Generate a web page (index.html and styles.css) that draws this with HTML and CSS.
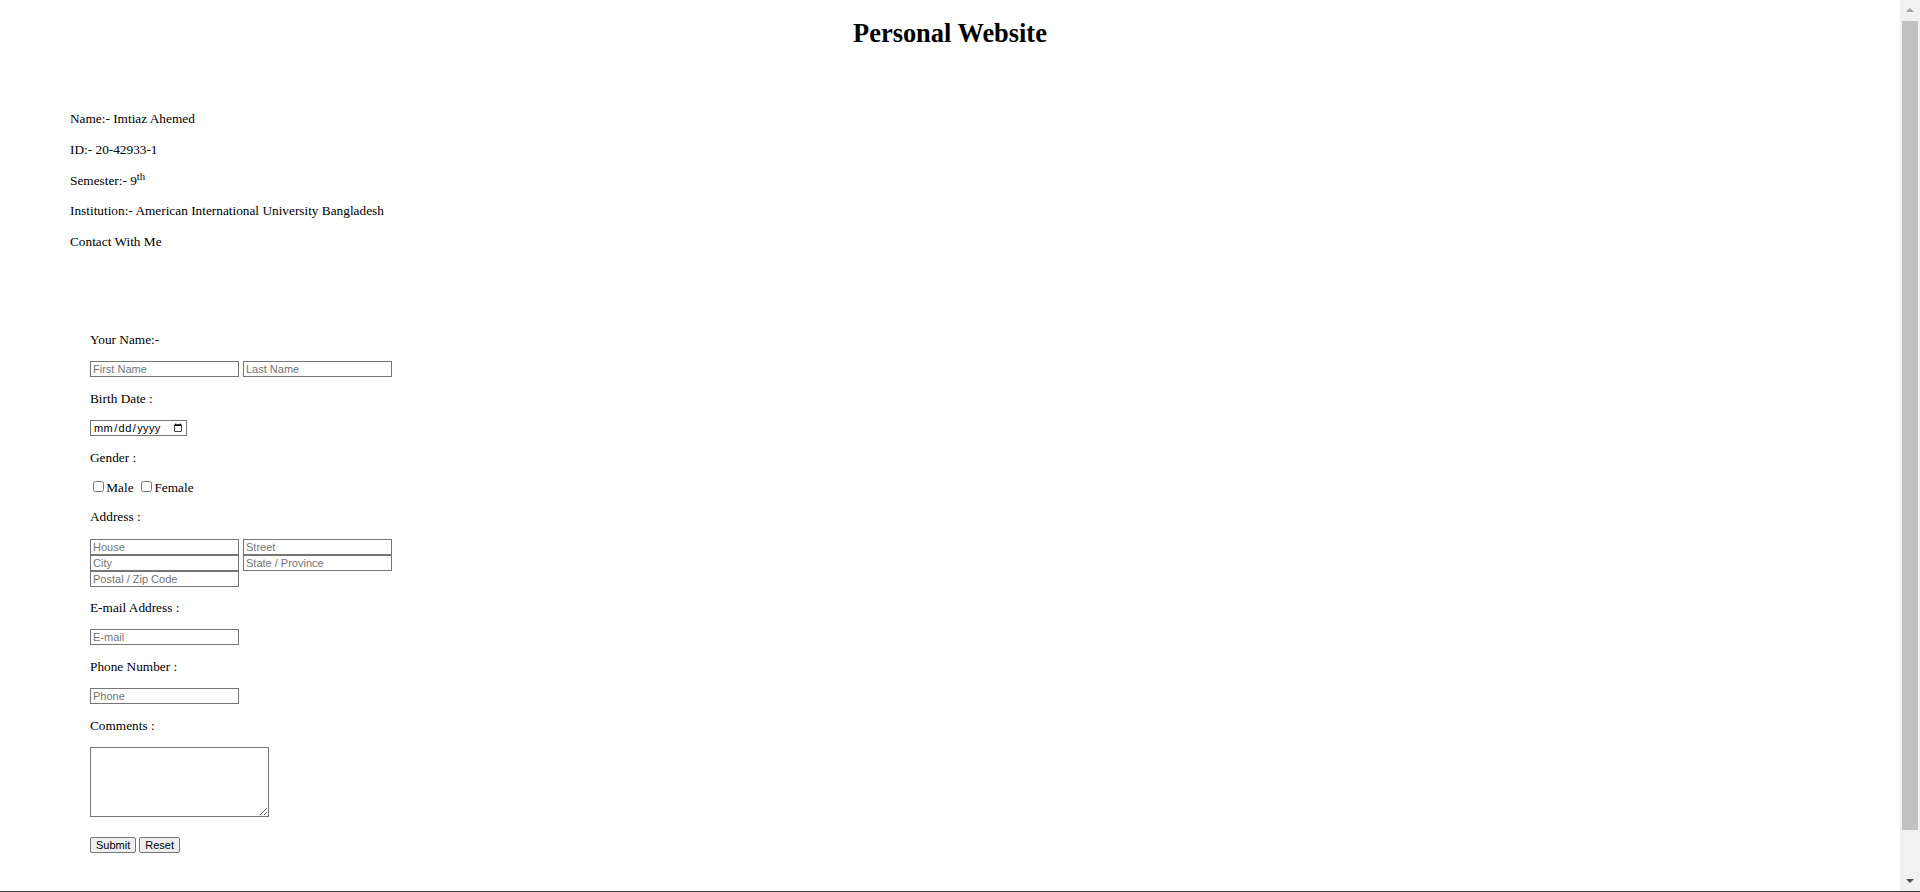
FILE: index.html
```html
<!DOCTYPE html>
<html lang="en">
<head>
<meta charset="utf-8">
<title>Personal Website</title>
<link rel="stylesheet" href="styles.css">
</head>
<body>
<header class="site-header">
  <h1 class="title">Personal Website</h1>
</header>
<main class="page">
  <section class="info">
    <p class="info-line">Name:- Imtiaz Ahemed</p>
    <p class="info-line">ID:- 20-42933-1</p>
    <p class="info-line">Semester:- 9<sup class="sup">th</sup></p>
    <p class="info-line">Institution:- American International University Bangladesh</p>
    <p class="info-line">Contact With Me</p>
  </section>

  <form class="contact-form" onsubmit="return false;">
    <div class="field">
      <p class="label">Your Name:-</p>
      <div class="row">
        <input class="text-input" type="text" placeholder="First Name">
        <input class="text-input" type="text" placeholder="Last Name">
      </div>
    </div>

    <div class="field">
      <p class="label">Birth Date :</p>
      <div class="row">
        <input class="date-input" type="date">
      </div>
    </div>

    <div class="field field--check">
      <p class="label">Gender :</p>
      <div class="check-row">
        <label class="check"><input class="check-box" type="checkbox">Male</label>
        <label class="check"><input class="check-box" type="checkbox">Female</label>
      </div>
    </div>

    <div class="field field--address">
      <p class="label">Address :</p>
      <div class="address-grid">
        <input class="text-input" type="text" placeholder="House">
        <input class="text-input" type="text" placeholder="Street">
        <input class="text-input" type="text" placeholder="City">
        <input class="text-input" type="text" placeholder="State / Province">
        <input class="text-input" type="text" placeholder="Postal / Zip Code">
      </div>
    </div>

    <div class="field">
      <p class="label">E-mail Address :</p>
      <div class="row">
        <input class="text-input" type="email" placeholder="E-mail">
      </div>
    </div>

    <div class="field">
      <p class="label">Phone Number :</p>
      <div class="row">
        <input class="text-input" type="tel" placeholder="Phone">
      </div>
    </div>

    <div class="field field--comments">
      <p class="label">Comments :</p>
      <textarea class="comments"></textarea>
    </div>

    <div class="buttons">
      <button class="btn" type="submit">Submit</button>
      <button class="btn" type="reset">Reset</button>
    </div>
  </form>
</main>

<div class="scrollbar" aria-hidden="true">
  <div class="sb-button"><span class="sb-arrow sb-arrow--up"></span></div>
  <div class="sb-track"><div class="sb-thumb"></div></div>
  <div class="sb-button"><span class="sb-arrow sb-arrow--down"></span></div>
</div>
<div class="window-edge" aria-hidden="true"></div>
</body>
</html>
```

FILE: styles.css
```css
html {
  background: #ffffff;
}

body {
  margin: 0;
  padding-right: 20px;
  font-family: "Liberation Serif", "Times New Roman", serif;
  font-size: 13.3px;
  color: #000000;
  background: #ffffff;
}

/* fake classic scrollbar (overlay at right edge) */
.scrollbar {
  position: fixed;
  top: 0;
  right: 0;
  bottom: 1px;
  width: 20px;
  display: flex;
  flex-direction: column;
  background: #f1f1f1;
}

.sb-button {
  height: 20px;
  flex: none;
  display: flex;
  align-items: center;
  justify-content: center;
}

.sb-arrow {
  width: 0;
  height: 0;
  border-left: 4px solid transparent;
  border-right: 4px solid transparent;
}

.sb-arrow--up {
  border-bottom: 4px solid #a3a3a3;
}

.sb-arrow--down {
  border-top: 4px solid #505050;
}

.sb-track {
  flex: 1;
  padding: 0 2px;
}

.sb-thumb {
  height: 809px;
  margin-top: 0.5px;
  background: #c1c1c1;
}

.window-edge {
  position: fixed;
  left: 0;
  right: 0;
  bottom: 0;
  height: 1px;
  background: #3d3d3d;
}

.site-header {
  padding-top: 18px;
}

.title {
  margin: 0;
  font-size: 26.4px;
  line-height: 30px;
  font-weight: bold;
  text-align: center;
}

.page {
  padding-bottom: 91px;
}

.info {
  padding: 64.2px 0 0 70px;
}

.info-line {
  margin: 0 0 16px;
  line-height: 14.7px;
}

.info-line:last-child {
  margin-bottom: 0;
}

.sup {
  font-size: 10.8px;
  line-height: 0;
  vertical-align: super;
}

.contact-form {
  margin-top: 81.8px;
  padding-left: 90px;
}

.field {
  margin-bottom: 14px;
}

.label {
  margin: 0 0 13.3px;
  padding-top: 1.2px;
  line-height: 14.7px;
}

.row {
  display: flex;
  gap: 4.5px;
  height: 16px;
}

.text-input,
.date-input {
  box-sizing: border-box;
  height: 16px;
  margin: 0;
  padding: 0 2px;
  border: 1px solid #767676;
  border-radius: 0;
  font-family: "Liberation Sans", Arial, sans-serif;
  font-size: 11px;
  color: #000;
  background: #fff;
  outline: none;
}

.text-input {
  width: 148.5px;
}

.text-input::placeholder {
  color: #757575;
}

.date-input {
  width: 97px;
  padding: 0 1px 0 2px;
  letter-spacing: 0.4px;
}

.date-input::-webkit-calendar-picker-indicator {
  margin: 0;
  padding: 0 2px;
  width: 10px;
  height: 10px;
}

.field--check {
  margin-bottom: 14px;
}

.check-row {
  display: flex;
  height: 16px;
  line-height: 16px;
  align-items: baseline;
  padding-top: 0.8px;
  box-sizing: border-box;
}

.check {
  display: inline-flex;
  align-items: baseline;
  margin-right: 4.5px;
}

.check-box {
  width: 10.4px;
  height: 10.4px;
  margin: 0 2.6px 0 3.3px;
  vertical-align: baseline;
}

.field--address {
  margin-bottom: 13px;
}

.field--address .label {
  margin-bottom: 13.8px;
}

.address-grid {
  display: grid;
  grid-template-columns: 148.5px 148.5px;
  grid-auto-rows: 16px;
  column-gap: 4.5px;
  width: max-content;
}

.comments {
  display: block;
  box-sizing: border-box;
  width: 179px;
  height: 70px;
  margin: 0;
  padding: 2px;
  border: 1px solid #767676;
  border-radius: 0;
  font-family: "Liberation Mono", monospace;
  font-size: 10.6px;
  outline: none;
}

.field--comments {
  margin-bottom: 20.5px;
}

.field--comments .label {
  margin-bottom: 12.5px;
}

.buttons {
  display: flex;
  gap: 3px;
}

.btn {
  box-sizing: border-box;
  height: 16px;
  margin: 0;
  padding: 0 5px;
  border: 1px solid #767676;
  border-radius: 2px;
  background: #efefef;
  font-family: "Liberation Sans", Arial, sans-serif;
  font-size: 11px;
  line-height: 12px;
  color: #000;
}
```
